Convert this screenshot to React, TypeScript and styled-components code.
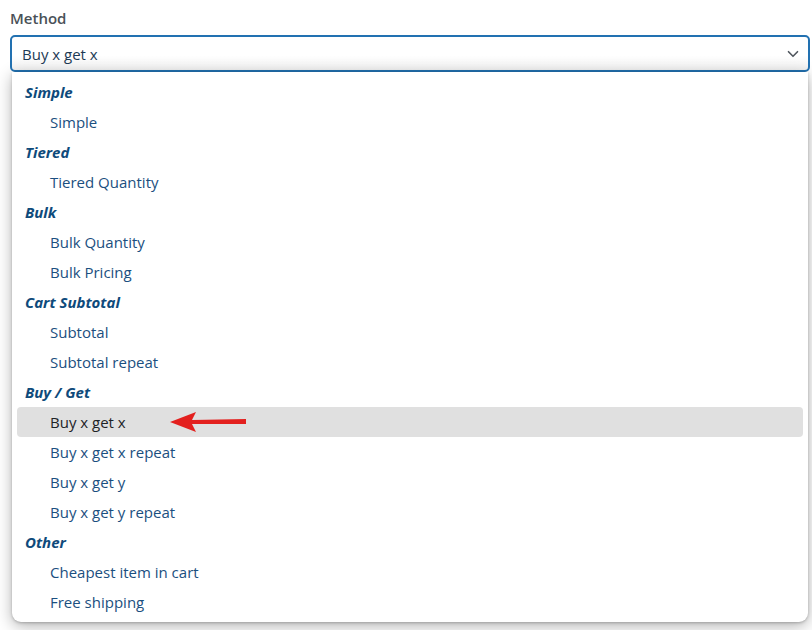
import React from "react";
import styled, { createGlobalStyle } from "styled-components";
import { ChevronDown } from "lucide-react";

const Global = createGlobalStyle`
  html, body { margin: 0; padding: 0; background: #fff; }
  body { font-family: "Open Sans", "Liberation Sans", sans-serif; }
  * { box-sizing: border-box; }
`;

const Page = styled.div`
  width: 812px;
  height: 630px;
  overflow: hidden;
  padding: 6px 2px 0 10px;
  position: relative;
`;

const Label = styled.div`
  font-size: 15px;
  font-weight: 600;
  color: #4a5157;
  line-height: 24px;
  margin-bottom: 5px;
`;

const Field = styled.div`
  position: relative;
  width: 800px;
`;

const Select = styled.div`
  height: 37px;
  border: 2px solid #2271b1;
  border-radius: 5px;
  background: linear-gradient(#fff 55%, #f2f2f2);
  display: flex;
  align-items: center;
  justify-content: space-between;
  padding: 0 6px 0 10px;
  font-size: 15px;
  color: #1d3a55;
`;

const Menu = styled.div`
  position: absolute;
  top: 37px;
  left: 2px;
  right: 2px;
  background: #fff;
  border-radius: 0 0 9px 9px;
  box-shadow: 0 4px 16px rgba(0, 0, 0, 0.3), 0 1px 3px rgba(0, 0, 0, 0.22);
  padding: 5px;
`;

const Group = styled.div`
  height: 30px;
  display: flex;
  align-items: center;
  padding-left: 8px;
  font-size: 15px;
  font-weight: 700;
  font-style: italic;
  color: #0e4a7b;
`;

const Item = styled.div<{ $active?: boolean }>`
  height: 30px;
  display: flex;
  align-items: center;
  padding-left: 33px;
  font-size: 15px;
  color: ${(p) => (p.$active ? "#1d2327" : "#1b4f80")};
  background: ${(p) => (p.$active ? "#e0e0e0" : "transparent")};
  border-radius: 4px;
  position: relative;
`;

const Arrow = styled.svg`
  position: absolute;
  left: 153px;
  top: 4px;
`;

const groups: { title: string; items: string[] }[] = [
  { title: "Simple", items: ["Simple"] },
  { title: "Tiered", items: ["Tiered Quantity"] },
  { title: "Bulk", items: ["Bulk Quantity", "Bulk Pricing"] },
  { title: "Cart Subtotal", items: ["Subtotal", "Subtotal repeat"] },
  {
    title: "Buy / Get",
    items: ["Buy x get x", "Buy x get x repeat", "Buy x get y", "Buy x get y repeat"],
  },
  { title: "Other", items: ["Cheapest item in cart", "Free shipping"] },
];

export default function App() {
  return (
    <Page>
      <Global />
      <Label>Method</Label>
      <Field>
        <Select>
          <span>Buy x get x</span>
          <ChevronDown size={18} color="#50575e" strokeWidth={2.2} />
        </Select>
        <Menu>
          {groups.map((g) => (
            <React.Fragment key={g.title}>
              <Group>{g.title}</Group>
              {g.items.map((it) => (
                <Item key={it} $active={it === "Buy x get x"}>
                  {it}
                  {it === "Buy x get x" && (
                    <Arrow width="80" height="22" viewBox="0 0 80 22">
                      <polygon points="0,11 26,1 22,9 76,8 76,13 22,13 26,21" fill="#e3201e" />
                    </Arrow>
                  )}
                </Item>
              ))}
            </React.Fragment>
          ))}
        </Menu>
      </Field>
    </Page>
  );
}
